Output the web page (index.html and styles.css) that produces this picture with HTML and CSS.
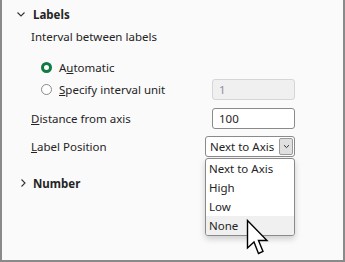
FILE: index.html
```html
<!DOCTYPE html>
<html>
<head>
<meta charset="utf-8">
<link rel="stylesheet" href="styles.css">
</head>
<body>
<div class="pane">
  <div class="section-head">
    <svg class="chev" width="10" height="10" viewBox="0 0 10 10"><path d="M1.5 3.5 L5 7 L8.5 3.5" fill="none" stroke="#333" stroke-width="1.1"/></svg>
    <span class="title">Labels</span>
  </div>
  <div class="sub-label">Interval between labels</div>
  <div class="row radio-row first">
    <label class="radio"><span class="dot on"></span><span>A<u>u</u>tomatic</span></label>
  </div>
  <div class="row radio-row">
    <label class="radio"><span class="dot"></span><span><u>S</u>pecify interval unit</span></label>
    <div class="input disabled">1</div>
  </div>
  <div class="row field-row">
    <span class="field-label"><u>D</u>istance from axis</span>
    <div class="input">100</div>
  </div>
  <div class="row field-row select-row">
    <span class="field-label"><u>L</u>abel Position</span>
    <div class="select-wrap">
      <div class="select">
        <span class="sel-text">Next to Axis</span>
        <span class="sel-btn"><svg width="7" height="5" viewBox="0 0 7 5"><path d="M1 1.2 L3.5 3.6 L6 1.2" fill="none" stroke="#333" stroke-width="1"/></svg></span>
      </div>
      <ul class="menu">
        <li>Next to Axis</li>
        <li>High</li>
        <li>Low</li>
        <li class="hover">None</li>
      </ul>
      <svg class="cursor" width="24" height="40" viewBox="0 0 24 40"><path d="M1.5 1.5 L1.5 29 L8 23 L12.5 34.5 L17 32.5 L12.5 21.5 L21 21.5 Z" fill="#fff" stroke="#000" stroke-width="1.4" stroke-linejoin="miter"/></svg>
    </div>
  </div>
  <div class="section-head number">
    <svg class="chev" width="10" height="10" viewBox="0 0 10 10"><path d="M3.5 1.5 L7 5 L3.5 8.5" fill="none" stroke="#333" stroke-width="1.1"/></svg>
    <span class="title">Number</span>
  </div>
</div>
</body>
</html>
```

FILE: styles.css
```css
* { box-sizing: border-box; }
html, body { margin: 0; padding: 0; }
body {
  font-family: "Noto Sans", "Open Sans", sans-serif;
  font-size: 11.5px;
  color: #242424;
}
.pane {
  width: 345px;
  height: 262px;
  background: #fafafa;
  border: 2px solid #8a8a8a;
  border-top: none;
  padding: 4px 48px 0 0;
}
.section-head {
  display: flex;
  align-items: center;
  height: 20px;
  padding-left: 14px;
}
.chev { margin-right: 7px; }
.title { font-weight: bold; }
.sub-label {
  padding-left: 29px;
  margin-top: 3px;
  height: 20px;
  line-height: 20px;
}
.row {
  display: flex;
  align-items: center;
  justify-content: space-between;
}
.radio-row { height: 22px; padding-left: 39px; }
.radio-row.first { margin-top: 9px; }
.radio { display: flex; align-items: center; }
.dot {
  width: 11px;
  height: 11px;
  border-radius: 50%;
  border: 1px solid #8a8a8a;
  background: #fff;
  margin-right: 7px;
}
.dot.on { border: 3px solid #107c41; }
.input {
  width: 83px;
  height: 21px;
  border: 1px solid #8a8a8a;
  border-radius: 3px;
  background: #fff;
  padding-left: 6px;
  line-height: 19px;
}
.input.disabled {
  background: #f0f0f0;
  border-color: #d6d6d6;
  color: #8e8e9e;
}
.field-row { padding-left: 29px; height: 21px; margin-top: 8px; }
.select-row { margin-top: 7px; }
.select-wrap { position: relative; }
.select {
  width: 90px;
  height: 21px;
  border: 1px solid #8a8a8a;
  border-radius: 3px;
  background: #fff;
  display: flex;
  align-items: center;
  justify-content: space-between;
  padding: 0 1px 0 4px;
}
.sel-btn {
  width: 14px;
  height: 17px;
  background: #e0e0e0;
  border: 1px solid #9a9a9a;
  border-radius: 2px;
  display: flex;
  align-items: center;
  justify-content: center;
}
.menu {
  position: absolute;
  left: 0;
  top: 22px;
  width: 90px;
  margin: 0;
  padding: 0;
  list-style: none;
  background: #fff;
  border: 1px solid #8a8a8a;
  border-radius: 3px;
  box-shadow: 0 3px 6px rgba(0,0,0,0.18);
  overflow: hidden;
}
.menu li {
  height: 19px;
  line-height: 19px;
  padding-left: 3px;
}
.menu li.hover { background: #f0f0f0; }
.cursor {
  position: absolute;
  left: 41px;
  top: 83px;
}
.number { margin-top: 16px; padding-left: 16px; }
.number .chev { margin-right: 5px; }
```
